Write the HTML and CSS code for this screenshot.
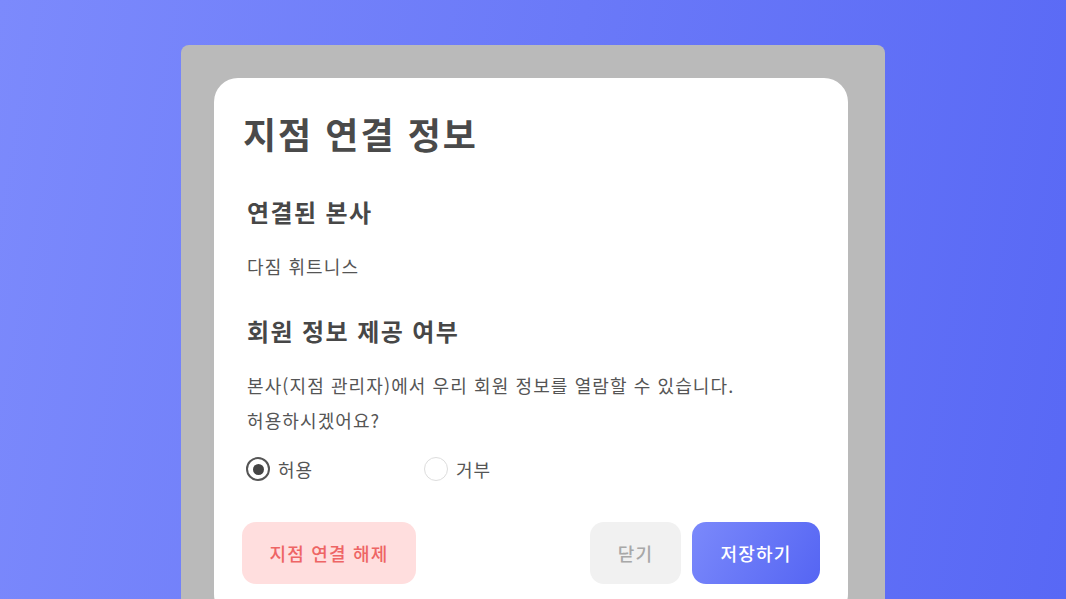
FILE: index.html
```html
<!DOCTYPE html>
<html lang="ko-KR">
<head>
    <meta charset="UTF-8">
    <meta name="viewport" content="width=device-width, initial-scale=1.0">
    <title>지점 연결 정보</title>
    <link rel="stylesheet" href="styles.css">
</head>
<body>
  <div class="backdrop">
    <article class="modal">
      <h2 class="modal-title">지점 연결 정보</h2>

      <section class="block block-hq">
        <h3 class="block-title">연결된 본사</h3>
        <p class="hq-name">다짐 휘트니스</p>
      </section>

      <section class="block block-share">
        <h3 class="block-title">회원 정보 제공 여부</h3>
        <p class="desc">본사(지점 관리자)에서 우리 회원 정보를 열람할 수 있습니다.<br>허용하시겠어요?</p>
        <div class="radios">
          <label class="radio">
            <input type="radio" name="share" checked>
            <span class="dot"></span>
            <span class="radio-label">허용</span>
          </label>
          <label class="radio">
            <input type="radio" name="share">
            <span class="dot"></span>
            <span class="radio-label">거부</span>
          </label>
        </div>
      </section>

      <div class="actions">
        <button type="button" class="btn btn-danger">지점 연결 해제</button>
        <div class="actions-right">
          <button type="button" class="btn btn-close">닫기</button>
          <button type="button" class="btn btn-save">저장하기</button>
        </div>
      </div>
    </article>
  </div>
</body>
</html>
```

FILE: styles.css
```css
* {
    box-sizing: border-box;
}

html,
body {
    height: 100%;
}

body {
    margin: 0;
    overflow: hidden;
    font-family: "Noto Sans CJK KR", "Noto Sans", sans-serif;
    background: linear-gradient(100deg, #7c8afc 0%, #6a79f8 50%, #5868f5 100%);
}

.backdrop {
    width: 704px;
    height: 554px;
    margin: 45px 0 0 181px;
    padding: 33px 0 0 33px;
    background: #bababa;
    border-radius: 8px 8px 0 0;
    overflow: hidden;
}

.modal {
    width: 634px;
    height: 540px;
    padding: 30px 28px 0 29px;
    background: #fff;
    border-radius: 24px;
}

.modal-title {
    margin: 0;
    font-size: 36px;
    line-height: 50px;
    font-weight: 700;
    letter-spacing: 2px;
    color: #4a4a4a;
}

.block {
    padding-left: 4px;
}

.block-title {
    margin: 0;
    font-size: 24px;
    line-height: 34px;
    font-weight: 700;
    letter-spacing: 1.4px;
    color: #474747;
}

.block-hq {
    margin-top: 37px;
}

.hq-name {
    margin: 23px 0 0;
    font-size: 18px;
    line-height: 28px;
    letter-spacing: 1.1px;
    color: #555;
}

.block-share {
    margin-top: 34px;
}

.desc {
    margin: 20px 0 0;
    font-size: 18px;
    line-height: 35px;
    letter-spacing: 1.1px;
    color: #555;
}

.radios {
    display: grid;
    grid-template-columns: 178px 178px;
    margin-top: 17px;
}

.radio {
    display: flex;
    align-items: center;
    gap: 8px;
    height: 28px;
    margin-left: -1px;
}

.radio input {
    display: none;
}

.dot {
    display: flex;
    align-items: center;
    justify-content: center;
    width: 24px;
    height: 24px;
    border: 1.5px solid #ddd;
    border-radius: 50%;
    background: #fff;
}

.radio input:checked + .dot {
    border: 2px solid #555;
}

.radio input:checked + .dot::after {
    content: "";
    width: 11px;
    height: 11px;
    border-radius: 50%;
    background: #444;
}

.radio-label {
    font-size: 18px;
    letter-spacing: 1px;
    color: #555;
}

.actions {
    display: flex;
    justify-content: space-between;
    margin-top: 39px;
}

.actions-right {
    display: flex;
    gap: 11px;
}

.btn {
    height: 62px;
    border: 0;
    border-radius: 14px;
    font-family: inherit;
    font-size: 18px;
    font-weight: 500;
    letter-spacing: 1.2px;
}

.btn-danger {
    width: 174px;
    margin-left: -1px;
    background: #ffdede;
    color: #ee6565;
}

.btn-close {
    width: 91px;
    background: #f1f1f1;
    color: #a8a8a8;
}

.btn-save {
    width: 128px;
    background: linear-gradient(120deg, #7b89fb 0%, #5565f3 100%);
    color: #fff;
}
```
